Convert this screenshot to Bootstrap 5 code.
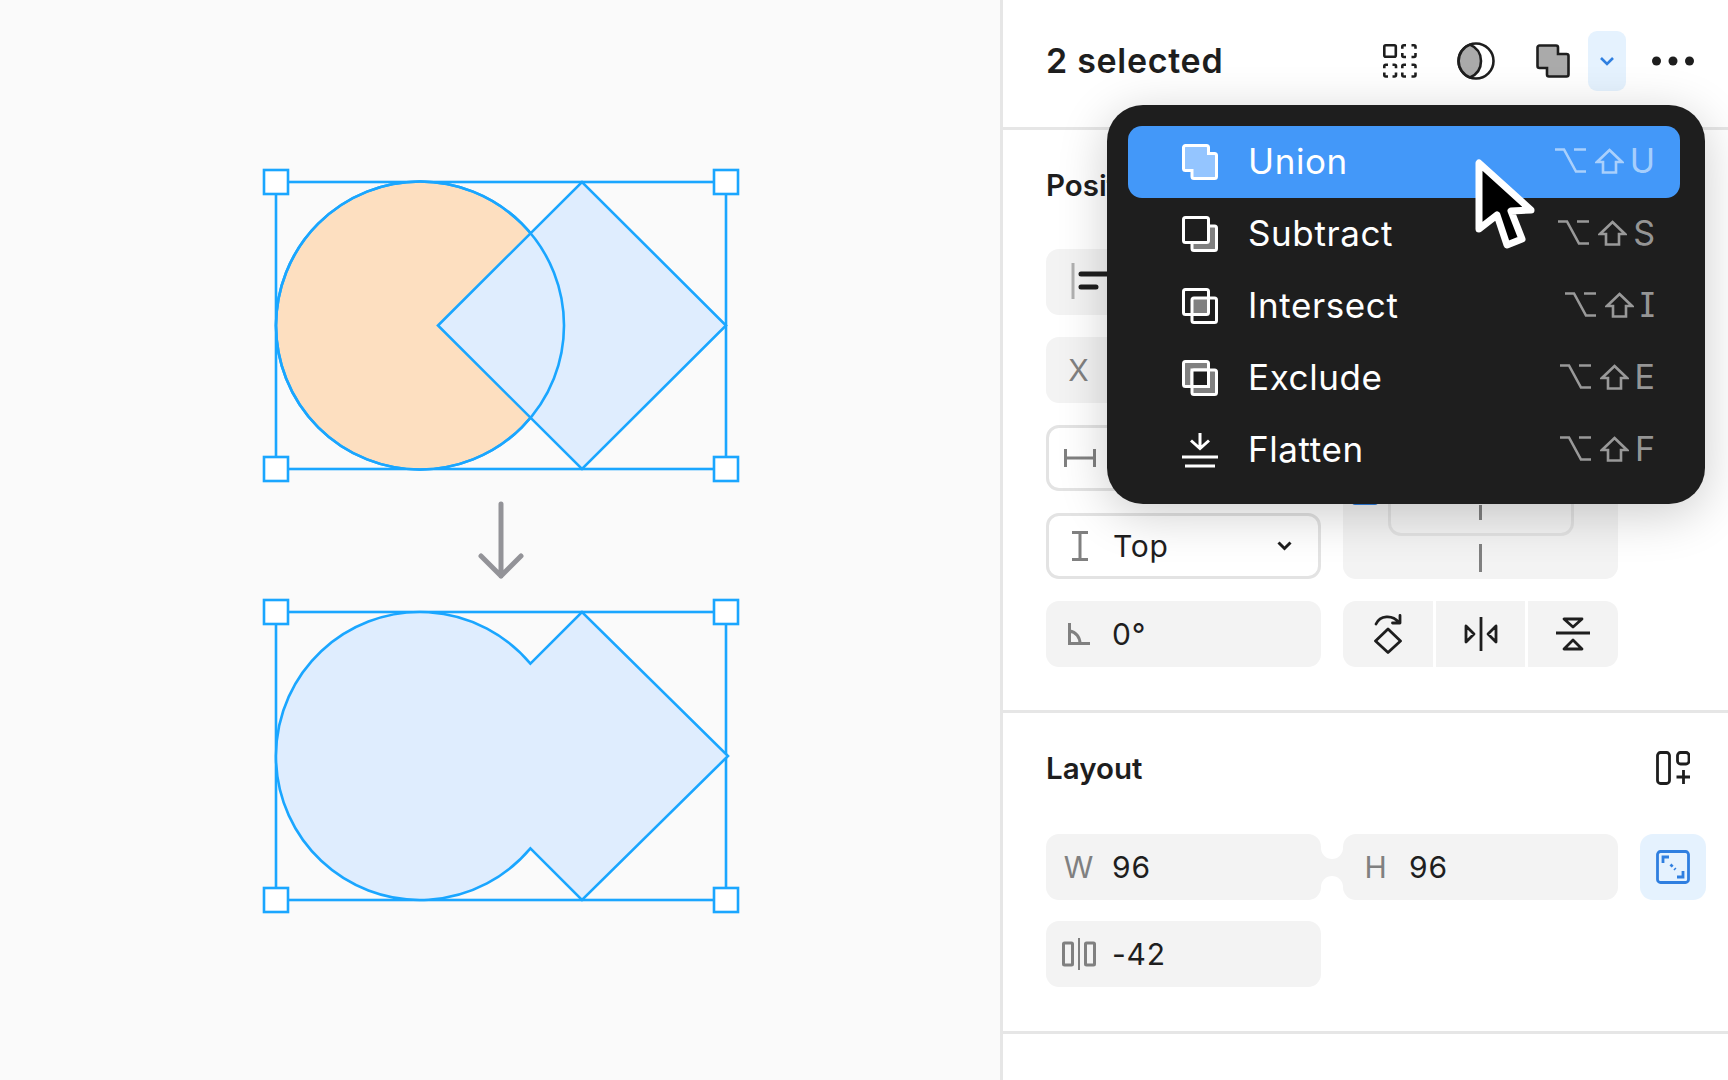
<!DOCTYPE html>
<html lang="en">
<head>
  <meta charset="UTF-8" />
  <title>Boolean groups</title>
  <link href="https://cdn.jsdelivr.net/npm/bootstrap@5.3.2/dist/css/bootstrap.min.css" rel="stylesheet" />
  <style>
    body { font-family: Inter, "Liberation Sans", sans-serif; background: #fff; color: #1e1e1e; width: 1728px; height: 1080px; overflow: hidden; }
    .stage { width: 1728px; height: 1080px; }
    .canvas-area { width: 1000px; flex: none; background: #fafafa; }
    .canvas-area svg { display: block; }
    .side-panel { width: 728px; flex: none; border-left: 3px solid #e6e6e6; }

    .panel-head { height: 130px; padding: 0 22px 6px 43px; border-bottom: 3px solid #e6e6e6; }
    .head-title { font-size: 34px; font-weight: 600; letter-spacing: .7px; }
    .head-icons svg { display: block; flex: none; }
    .ico-mask { margin-left: 40px; }
    .ico-bool { margin-left: 41px; }
    .chev-btn { width: 38px; height: 60px; margin-left: 18px; background: #e5f2fe; border-radius: 9px; }
    .ico-dots { margin-left: 26px; margin-right: 12px; }

    .panel-sec { padding: 38px 22px 44px 43px; border-bottom: 3px solid #e6e6e6; }
    .sec-first { padding-bottom: 43px; }
    .sec-title { font-size: 29.500px; font-weight: 600; line-height: 34px; margin-bottom: 49px; }
    .sec-first .sec-title { margin-bottom: 47px; }
    .sec-add { margin-right: 16px; }

    .field-grid { display: grid; grid-template-columns: 275px 275px; gap: 22px; grid-auto-rows: 66px; }
    .fld { background: #f3f3f3; border-radius: 13px; height: 66px; font-size: 30px; letter-spacing: .8px; }
    .fld-line { background: #fff; border: 3px solid #e3e3e3; }
    .fld-wide { grid-column: span 2; }
    .fld-slot { width: 66px; flex: none; color: #808080; font-weight: 400; }
    .fld-line .fld-slot { margin-left: -2px; }
    .fld-tail { margin-left: auto; margin-right: 26px; }
    .ico-align { margin-left: 24px; }

    .pin-box { grid-row: span 2; background: #f3f3f3; border-radius: 13px; padding-bottom: 7px; }
    .pin-inner { width: 186px; height: 80px; border: 3px solid #e2e2e2; border-radius: 13px; margin-bottom: 8px; }
    .pin-tick { width: 3px; background: #808080; }
    .pin-tick-a { height: 15px; margin-bottom: 13px; }
    .pin-tick-b { height: 28px; }
    .pin-blue { left: 9px; top: 60px; width: 26px; height: 20px; background: #2f7fe0; border-radius: 3px; }

    .flip-group { background: transparent; gap: 3px; }
    .flip-cell { flex: 1; background: #f3f3f3; height: 66px; }
    .flip-cell:first-child { border-radius: 13px 0 0 13px; }
    .flip-cell:last-child { border-radius: 0 13px 13px 0; }

    .size-row { display: flex; height: 66px; }
    .size-row .fld { width: 275px; flex: none; }
    .size-bridge { width: 22px; flex: none; background: #f3f3f3; }
    .size-bridge i { display: block; height: 24.5px; background: #fff; }
    .size-bridge i:first-child { border-radius: 0 0 11px 11px; }
    .size-bridge i:last-child { border-radius: 11px 11px 0 0; }
    .ratio-btn { width: 66px; height: 66px; margin-left: 22px; background: #e5f2fe; border-radius: 13px; }
    .gap-fld { width: 275px; margin-top: 21px; }

    .bool-menu { left: 1107px; top: 105px; width: 598px; height: 399px; padding: 21px 25px 0 21px; background: #1e1e1e; border-radius: 36px; color: #fff; box-shadow: 0 10px 50px rgba(0,0,0,.2); z-index: 5; }
    .bool-item { height: 72px; padding: 0 25px 0 54px; border-radius: 14px; font-size: 35px; letter-spacing: .6px; }
    .bool-item > svg { flex: none; margin-right: 30px; }
    .bool-item > span { padding-bottom: 2px; }
    .bool-on { background: #4398f9; }
    .keys { margin-left: auto; padding-bottom: 3px; color: rgba(255,255,255,.55); font-size: 34px; font-feature-settings: "cv08"; letter-spacing: 0; }
    .keys svg { display: block; }
    .keys svg:first-child { margin-right: 9px; }
    .keys svg + svg { margin-right: 6px; }
    .mouse-ptr { left: 1470px; top: 150px; z-index: 6; }
  </style>
</head>
<body>
<div class="stage d-flex position-relative">

  <!-- canvas -->
  <div class="canvas-area">
    <svg width="1000" height="1080" viewBox="0 0 1000 1080" fill="none" stroke="#1aa6ff" stroke-width="2.6">
      <rect x="276" y="182" width="450" height="287" />
      <circle cx="420" cy="325.5" r="144" fill="#fddfc0" />
      <path d="M438 325.5 L582 182 L726 325.5 L582 469 Z" fill="#dfedfe" />
      <circle cx="420" cy="325.5" r="144" />
      <g fill="#fff">
        <rect x="264" y="170" width="24" height="24" />
        <rect x="714" y="170" width="24" height="24" />
        <rect x="264" y="457" width="24" height="24" />
        <rect x="714" y="457" width="24" height="24" />
      </g>

      <path d="M501 504 V576 M481 556 L501 576 L521 556" stroke="#939398" stroke-width="5" stroke-linecap="round" stroke-linejoin="round" />

      <rect x="276" y="612" width="450" height="288" />
      <path d="M530.4 663.6 A144 144 0 1 0 530.4 848.4 L582 900 L728 756 L582 612 Z" fill="#dfedfe" />
      <g fill="#fff">
        <rect x="264" y="600" width="24" height="24" />
        <rect x="714" y="600" width="24" height="24" />
        <rect x="264" y="888" width="24" height="24" />
        <rect x="714" y="888" width="24" height="24" />
      </g>
    </svg>
  </div>

  <!-- right panel -->
  <div class="side-panel">
    <div class="panel-head d-flex align-items-center">
      <div class="head-title">2 selected</div>
      <div class="head-icons d-flex align-items-center ms-auto">
        <svg width="34" height="34" viewBox="0 0 34 34" fill="none" stroke="#1e1e1e" stroke-width="2.6">
          <rect x="1.300" y="1.300" width="11.500" height="11.500" rx="1.500" />
          <path d="M23 1.300h-2.200q-1.500 0-1.500 1.500v2M28.500 1.300h2.500q1.500 0 1.500 1.500v2M19.300 9v2.500q0 1.500 1.500 1.500h2.200M28.500 13h2.500q1.500 0 1.500-1.500V9" />
          <path d="M5 20.800H2.800q-1.500 0-1.500 1.500v2M9.500 20.800h2q1.500 0 1.500 1.500v2M1.300 28.500V31q0 1.500 1.500 1.500H5M9.500 32.500h2q1.500 0 1.500-1.500v-2.500" />
          <path d="M23 20.800h-2.200q-1.500 0-1.500 1.500v2M28.500 20.800h2.500q1.500 0 1.500 1.500v2M19.300 28.500V31q0 1.500 1.500 1.500H23M28.500 32.500h2.500q1.500 0 1.500-1.500v-2.500" />
        </svg>
        <svg class="ico-mask" width="38" height="38" viewBox="0 0 38 38" fill="none" stroke="#1e1e1e" stroke-width="2.6">
          <circle cx="19" cy="19" r="17.500" />
          <path d="M13 2.600 C21 6 24 12 24 19 C24 26 21 32 13 35.400 A17.500 17.500 0 0 1 13 2.600 Z" fill="#aaa" />
        </svg>
        <svg class="ico-bool" width="34" height="34" viewBox="0 0 34 34" fill="none" stroke="#1e1e1e" stroke-width="2.6">
          <path d="M1.500 3.500a2 2 0 0 1 2-2H20a2 2 0 0 1 2 2V10h8.500a2 2 0 0 1 2 2V30.500a2 2 0 0 1-2 2H13a2 2 0 0 1-2-2V24H3.500a2 2 0 0 1-2-2Z" fill="#aaa" />
        </svg>
        <div class="chev-btn d-flex align-items-center justify-content-center">
          <svg width="16" height="10" viewBox="0 0 16 10" fill="none" stroke="#2f7fe0" stroke-width="2.6"><path d="M2 2l6 6 6-6" /></svg>
        </div>
        <svg class="ico-dots" width="42" height="10" viewBox="0 0 42 10" fill="#1e1e1e">
          <circle cx="4.500" cy="5" r="4.500" /><circle cx="21" cy="5" r="4.500" /><circle cx="37.500" cy="5" r="4.500" />
        </svg>
      </div>
    </div>

    <div class="panel-sec sec-first">
      <div class="sec-title">Position</div>
      <div class="field-grid">
        <div class="fld fld-wide d-flex align-items-center">
          <svg class="ico-align" width="60" height="38" viewBox="0 0 60 38" fill="none">
            <path d="M3 0V36" stroke="#b0b0b0" stroke-width="3" />
            <path d="M11 11H58M11 24H26" stroke="#1e1e1e" stroke-width="5" stroke-linecap="round" />
          </svg>
        </div>
        <div class="fld d-flex align-items-center"><div class="fld-slot text-center">X</div></div>
        <div class="fld"></div>
        <div class="fld fld-line d-flex align-items-center">
          <div class="fld-slot d-flex justify-content-center">
            <svg width="32" height="18" viewBox="0 0 32 18" fill="none" stroke="#808080" stroke-width="3"><path d="M1.500 0V18M30.500 0V18M1.500 9H30.500" /></svg>
          </div>
        </div>
        <div class="pin-box position-relative d-flex flex-column align-items-center justify-content-end">
          <div class="pin-blue position-absolute"></div>
          <div class="pin-inner d-flex justify-content-center align-items-end"><div class="pin-tick pin-tick-a"></div></div>
          <div class="pin-tick pin-tick-b"></div>
        </div>
        <div class="fld fld-line d-flex align-items-center">
          <div class="fld-slot d-flex justify-content-center">
            <svg width="18" height="30" viewBox="0 0 18 30" fill="none" stroke="#808080" stroke-width="3"><path d="M1 1.500H17M1 28.500H17M9 1.500V28.500" /></svg>
          </div>
          <span>Top</span>
          <svg class="fld-tail" width="15" height="10" viewBox="0 0 15 10" fill="none" stroke="#1e1e1e" stroke-width="3"><path d="M1.500 1.500L7.500 7.500L13.500 1.500" /></svg>
        </div>
        <div class="fld d-flex align-items-center">
          <div class="fld-slot d-flex justify-content-center">
            <svg width="22" height="22" viewBox="0 0 22 22" fill="none" stroke="#808080" stroke-width="3"><path d="M1.500 0V20.500H22M1.500 8C8 9 12 14 12 20.500" /></svg>
          </div>
          <span>0°</span>
        </div>
        <div class="flip-group d-flex">
          <div class="flip-cell d-flex align-items-center justify-content-center">
            <svg width="30" height="40" viewBox="0 0 30 40" fill="none" stroke="#1e1e1e" stroke-width="2.800" stroke-linejoin="round" stroke-linecap="round">
              <path d="M15 15L27.500 27L15 38.500L2.500 27Z" />
              <path d="M3 10C7 1.500 19 0 26 8.500M27 1.500V9H19.500" />
            </svg>
          </div>
          <div class="flip-cell d-flex align-items-center justify-content-center">
            <svg width="34" height="34" viewBox="0 0 34 34" fill="none" stroke="#1e1e1e" stroke-width="2.800">
              <path d="M17 0V34" />
              <path d="M2 9L10 17L2 25ZM32 9L24 17L32 25Z" stroke-linejoin="round" />
            </svg>
          </div>
          <div class="flip-cell d-flex align-items-center justify-content-center">
            <svg width="34" height="34" viewBox="0 0 34 34" fill="none" stroke="#1e1e1e" stroke-width="2.800">
              <path d="M0 16H34" />
              <path d="M8 2H26L17 10ZM8 32H26L17 23Z" stroke-linejoin="round" />
            </svg>
          </div>
        </div>
      </div>
    </div>

    <div class="panel-sec">
      <div class="d-flex justify-content-between align-items-center sec-title">
        <span>Layout</span>
        <svg class="sec-add" width="34" height="34" viewBox="0 0 34 34" fill="none" stroke="#1e1e1e" stroke-width="2.800">
          <rect x="1.500" y="1.500" width="12" height="31" rx="3" />
          <rect x="21.500" y="1.500" width="11.500" height="11.500" rx="3" />
          <path d="M27.500 19V33M20.500 26H34.500" />
        </svg>
      </div>
      <div class="size-row">
        <div class="fld d-flex align-items-center"><div class="fld-slot text-center">W</div><span>96</span></div>
        <div class="size-bridge d-flex flex-column justify-content-between"><i></i><i></i></div>
        <div class="fld d-flex align-items-center"><div class="fld-slot text-center">H</div><span>96</span></div>
        <div class="ratio-btn d-flex align-items-center justify-content-center">
          <svg width="34" height="34" viewBox="0 0 34 34" fill="none" stroke="#2f7fe0" stroke-width="2.800">
            <rect x="1.500" y="1.500" width="31" height="31" rx="3" />
            <path d="M7 13V7H13M27 21V27H21" />
            <path d="M14.500 14.500L19.500 19.500" stroke-dasharray="3 2.500" />
          </svg>
        </div>
      </div>
      <div class="fld gap-fld d-flex align-items-center">
        <div class="fld-slot d-flex justify-content-center">
          <svg width="34" height="32" viewBox="0 0 34 32" fill="none" stroke="#808080" stroke-width="3">
            <rect x="1.500" y="5" width="9" height="22" rx="1" />
            <rect x="23.500" y="5" width="9" height="22" rx="1" />
            <path d="M17 0V32" stroke-width="2" />
          </svg>
        </div>
        <span>-42</span>
      </div>
    </div>
  </div>

  <!-- dropdown -->
  <div class="bool-menu position-absolute">
    <div class="bool-item bool-on d-flex align-items-center">
      <svg width="36" height="36" viewBox="0 0 36 36" fill="none" stroke="#fff" stroke-width="3">
        <path d="M1.500 3.500a2 2 0 0 1 2-2H24.500a2 2 0 0 1 2 2V9.500H32.500a2 2 0 0 1 2 2V32.500a2 2 0 0 1-2 2H12a2 2 0 0 1-2-2V26.500H3.500a2 2 0 0 1-2-2Z" fill="#94c5ff" />
      </svg>
      <span>Union</span>
      <div class="keys d-flex align-items-center">
        <svg width="31" height="25" viewBox="0 0 31 25" fill="none" stroke="currentColor" stroke-width="2.600"><path d="M0 1.500H9L21 23.500H31M19 1.500H31" /></svg>
        <svg width="29" height="26" viewBox="0 0 29 26" fill="none" stroke="currentColor" stroke-width="2.600"><path d="M14.500 2L27 14H21V24.500H8V14H2Z" /></svg>
        <span>U</span>
      </div>
    </div>
    <div class="bool-item d-flex align-items-center">
      <svg width="36" height="36" viewBox="0 0 36 36" fill="none" stroke="#fff" stroke-width="3">
        <rect x="10" y="10" width="24.500" height="24.500" rx="2" fill="#808080" />
        <rect x="1.500" y="1.500" width="25" height="25" rx="2" fill="#1e1e1e" />
      </svg>
      <span>Subtract</span>
      <div class="keys d-flex align-items-center">
        <svg width="31" height="25" viewBox="0 0 31 25" fill="none" stroke="currentColor" stroke-width="2.600"><path d="M0 1.500H9L21 23.500H31M19 1.500H31" /></svg>
        <svg width="29" height="26" viewBox="0 0 29 26" fill="none" stroke="currentColor" stroke-width="2.600"><path d="M14.500 2L27 14H21V24.500H8V14H2Z" /></svg>
        <span>S</span>
      </div>
    </div>
    <div class="bool-item d-flex align-items-center">
      <svg width="36" height="36" viewBox="0 0 36 36" fill="none" stroke="#fff" stroke-width="3">
        <rect x="10" y="10" width="16.500" height="16.500" fill="#808080" stroke="none" />
        <rect x="1.500" y="1.500" width="25" height="25" rx="2" />
        <rect x="10" y="10" width="24.500" height="24.500" rx="2" />
      </svg>
      <span>Intersect</span>
      <div class="keys d-flex align-items-center">
        <svg width="31" height="25" viewBox="0 0 31 25" fill="none" stroke="currentColor" stroke-width="2.600"><path d="M0 1.500H9L21 23.500H31M19 1.500H31" /></svg>
        <svg width="29" height="26" viewBox="0 0 29 26" fill="none" stroke="currentColor" stroke-width="2.600"><path d="M14.500 2L27 14H21V24.500H8V14H2Z" /></svg>
        <span>I</span>
      </div>
    </div>
    <div class="bool-item d-flex align-items-center">
      <svg width="36" height="36" viewBox="0 0 36 36" fill="none" stroke="#fff" stroke-width="3">
        <rect x="1.500" y="1.500" width="25" height="25" rx="2" fill="#808080" />
        <rect x="10" y="10" width="24.500" height="24.500" rx="2" fill="#808080" />
        <rect x="10" y="10" width="16.500" height="16.500" fill="#1e1e1e" />
      </svg>
      <span>Exclude</span>
      <div class="keys d-flex align-items-center">
        <svg width="31" height="25" viewBox="0 0 31 25" fill="none" stroke="currentColor" stroke-width="2.600"><path d="M0 1.500H9L21 23.500H31M19 1.500H31" /></svg>
        <svg width="29" height="26" viewBox="0 0 29 26" fill="none" stroke="currentColor" stroke-width="2.600"><path d="M14.500 2L27 14H21V24.500H8V14H2Z" /></svg>
        <span>E</span>
      </div>
    </div>
    <div class="bool-item d-flex align-items-center">
      <svg width="36" height="36" viewBox="0 0 36 36" fill="none" stroke="#fff" stroke-width="3">
        <path d="M18 1V16M9 8.500L18 16.500L27 8.500M0 25H36M3 34H33" />
      </svg>
      <span>Flatten</span>
      <div class="keys d-flex align-items-center">
        <svg width="31" height="25" viewBox="0 0 31 25" fill="none" stroke="currentColor" stroke-width="2.600"><path d="M0 1.500H9L21 23.500H31M19 1.500H31" /></svg>
        <svg width="29" height="26" viewBox="0 0 29 26" fill="none" stroke="currentColor" stroke-width="2.600"><path d="M14.500 2L27 14H21V24.500H8V14H2Z" /></svg>
        <span>F</span>
      </div>
    </div>
  </div>

  <!-- mouse pointer -->
  <svg class="mouse-ptr position-absolute" width="70" height="105" viewBox="1470 150 70 105">
    <path d="M1479 163V229L1497 215L1507 245L1522 239L1511 211L1531 210Z" fill="#000" stroke="#fff" stroke-width="7" stroke-linejoin="round" />
  </svg>
</div>
</body>
</html>
